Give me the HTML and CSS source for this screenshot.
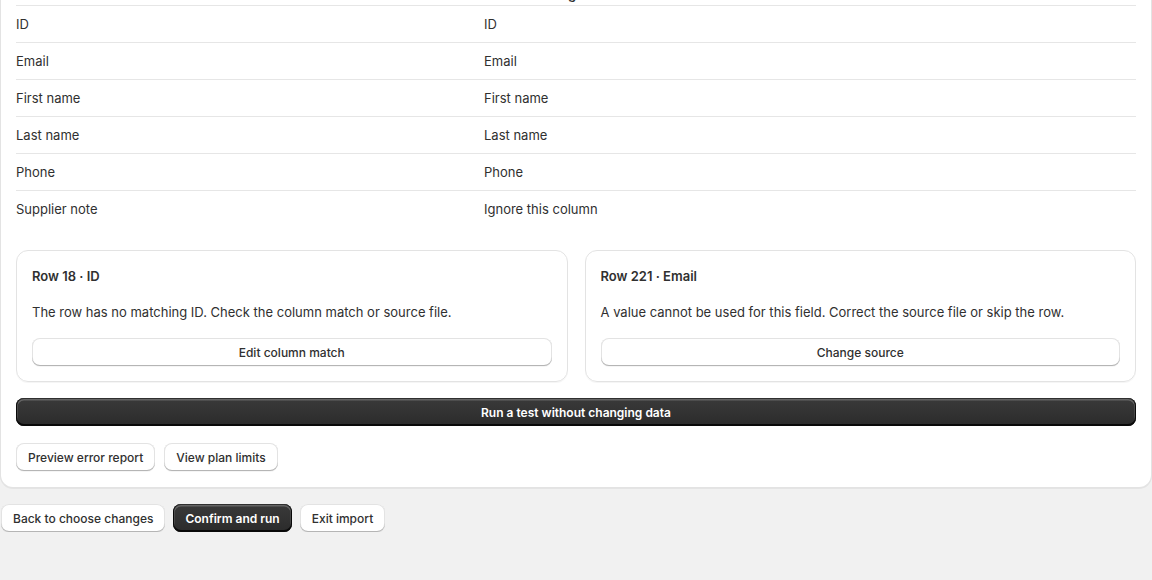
FILE: index.html
```html
<!DOCTYPE html>
<html lang="en">
<head>
    <meta charset="UTF-8">
    <meta name="viewport" content="width=device-width, initial-scale=1.0">
    <title>Import review</title>
    <link rel="stylesheet" href="styles.css">
</head>
<body>
    <div class="page">
        <section class="card">
            <div class="match-table">
                <div class="match-row head">
                    <span>Source column</span>
                    <span>Field matching</span>
                </div>
                <div class="match-row"><span>ID</span><span>ID</span></div>
                <div class="match-row"><span>Email</span><span>Email</span></div>
                <div class="match-row"><span>First name</span><span>First name</span></div>
                <div class="match-row"><span>Last name</span><span>Last name</span></div>
                <div class="match-row"><span>Phone</span><span>Phone</span></div>
                <div class="match-row"><span>Supplier note</span><span>Ignore this column</span></div>
            </div>

            <div class="issues">
                <div class="issue">
                    <h3>Row 18 · ID</h3>
                    <p>The row has no matching ID. Check the column match or source file.</p>
                    <button class="btn">Edit column match</button>
                </div>
                <div class="issue">
                    <h3>Row 221 · Email</h3>
                    <p>A value cannot be used for this field. Correct the source file or skip the row.</p>
                    <button class="btn">Change source</button>
                </div>
            </div>

            <button class="btn btn-primary btn-full">Run a test without changing data</button>

            <div class="btn-group">
                <button class="btn">Preview error report</button>
                <button class="btn">View plan limits</button>
            </div>
        </section>

        <div class="btn-group footer">
            <button class="btn">Back to choose changes</button>
            <button class="btn btn-primary">Confirm and run</button>
            <button class="btn">Exit import</button>
        </div>
    </div>
</body>
</html>
```

FILE: styles.css
```css
* {
    margin: 0;
    padding: 0;
    box-sizing: border-box;
}

body {
    background: #f1f1f1;
    font-family: Inter, "Noto Sans", sans-serif;
    font-size: 13px;
    line-height: 20px;
    color: #303030;
    overflow: hidden;
}

/* page is shown scrolled down a little, header row sits above the fold */
.page {
    margin-top: -32px;
    padding: 0 1px;
}

.card {
    background: #fff;
    border-radius: 0 0 12px 12px;
    box-shadow: 0 0 0 1px #e3e3e3, 0 1px 0 1px rgba(0, 0, 0, 0.05);
    padding: 0 15px 16px;
    display: flex;
    flex-direction: column;
}

.match-row {
    display: grid;
    grid-template-columns: 468px 1fr;
    height: 37px;
    align-items: center;
    border-bottom: 1px solid #e6e6e6;
}

.match-row.head {
    height: 38px;
    align-items: end;
    line-height: 18px;
    padding-bottom: 2px;
    font-weight: 600;
}

.match-row:last-child {
    border-bottom: none;
    height: 36px;
}

.issues {
    display: grid;
    grid-template-columns: 1fr 1fr;
    gap: 17px;
    margin-top: 23px;
}

.issue {
    border: 1px solid #e3e3e3;
    border-radius: 12px;
    padding: 15px;
    display: flex;
    flex-direction: column;
    gap: 16px;
    box-shadow: 0 1px 0 rgba(0, 0, 0, 0.04);
}

.issue h3 {
    font-size: 13px;
    font-weight: 600;
    line-height: 20px;
}

.issue p {
    line-height: 20px;
}

.btn {
    font-family: inherit;
    font-size: 12px;
    font-weight: 500;
    color: #303030;
    background: #fff;
    border: none;
    border-radius: 8px;
    height: 28px;
    padding: 0 12px;
    box-shadow: inset 0 -1px 0 #b5b5b5, inset 0 0 0 1px #e3e3e3, 0 1px 0 rgba(0, 0, 0, 0.04);
}

.btn-primary {
    background: linear-gradient(#3a3a3a, #2b2b2b);
    color: #fff;
    font-weight: 600;
    box-shadow: inset 0 -1px 0 1px rgba(0, 0, 0, 0.8), inset 0 0 0 1px #303030, inset 0 1px 0 1.5px rgba(255, 255, 255, 0.22);
}

.btn-full {
    width: 100%;
    margin-top: 16px;
}

.btn-group {
    display: flex;
    gap: 9px;
    margin-top: 17px;
}

.footer {
    margin-top: 17px;
    gap: 8px;
}
```
